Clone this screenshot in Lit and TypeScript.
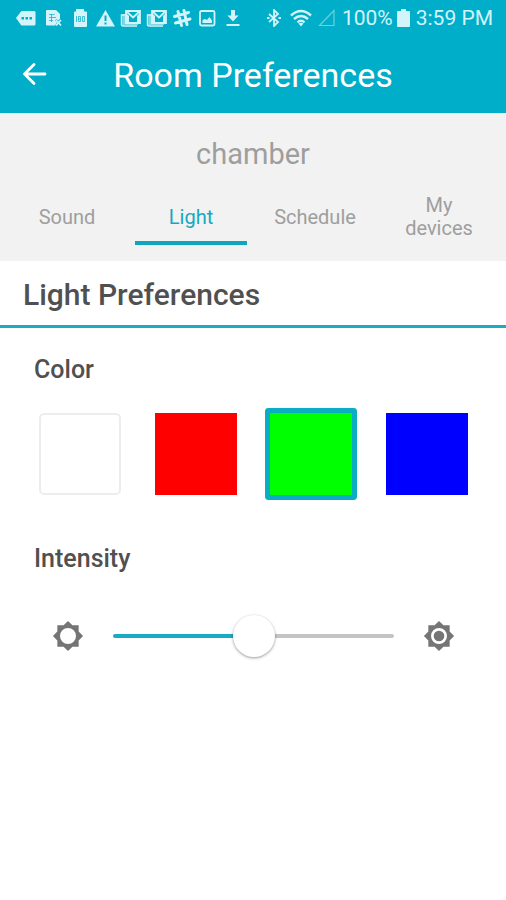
import { LitElement, html, css, svg } from "lit";
import { customElement, state } from "lit/decorators.js";

const notices = [
  svg`<path fill="currentColor" d="M0 10 5 3.500Q5.500 3 6.500 3H18Q19.500 3 19.500 4.500V16Q19.500 17.500 18 17.500H6.500Q5.500 17.500 5 17Z"/><path fill="#00aec9" d="M5.500 9h2.500v2.500H5.500zM9.500 9h2.500v2.500H9.500zM13.500 9h2.500v2.500h-2.500z"/>`,
  svg`<path fill="currentColor" d="M5 2h9l4 4v5l-2 1.500-1.500-1.500-1.500 1.500 2 2-2 3H5q-1 0-1-1V3q0-1 1-1z"/><path fill="none" stroke="#00aec9" stroke-width=".7" d="M7 6.500h5.500M7 9.500h7M7 12.500h4M9.500 6v8"/><path fill="none" stroke="currentColor" stroke-width="1.800" d="m14 12 5 5.500m0-5.500-5 5.500"/>`,
  svg`<path fill="currentColor" d="M8 1h8v2.500h2q1 0 1 1V18q0 1-1 1H7q-1 0-1-1V4.500q0-1 1-1h1z"/><path fill="none" stroke="#00aec9" stroke-width=".7" d="M8.500 8v6M10.500 8.500h2v5h-2zM10.500 11h2M14.500 8.500h2v5h-2z"/>`,
  svg`<path fill="currentColor" d="M11.500 2 21 18.500H2z"/><path fill="#00aec9" d="M10.500 7.500h2v5.500h-2zM10.500 14.500h2v2h-2z"/>`,
  svg`<path fill="none" stroke="currentColor" stroke-width="1.500" d="M5 7H1.500v9.500q0 1.500 2 1.500H17"/><path fill="currentColor" d="M2.500 6H6v9h12v2H2.500z" opacity=".6"/><path fill="none" stroke="currentColor" stroke-width="1.800" d="M6 3h14v12H6zM6 3l7 6.500L20 3"/><path fill="currentColor" d="M6 5 9 8v7H6zM20 5l-3 3v7h3z"/>`,
  svg`<path fill="none" stroke="currentColor" stroke-width="1.500" d="M5 7H1.500v9.500q0 1.500 2 1.500H17"/><path fill="currentColor" d="M2.500 6H6v9h12v2H2.500z" opacity=".6"/><path fill="none" stroke="currentColor" stroke-width="1.800" d="M6 3h14v12H6zM6 3l7 6.500L20 3"/><path fill="currentColor" d="M6 5 9 8v7H6zM20 5l-3 3v7h3z"/>`,
  svg`<path fill="none" stroke="currentColor" stroke-width="3" stroke-linecap="round" d="m6 3.500 3.500 14M12 2.500l3 14M2.500 8.500l14-4M3.500 15l14.500-4"/>`,
  svg`<rect x="2" y="3" width="14.500" height="14.500" rx="1.500" fill="none" stroke="currentColor" stroke-width="1.800"/><path fill="currentColor" d="M4.500 15v-3l2.500-1 2 1 2.500-3L14 12.500V15z"/>`,
  svg`<path fill="currentColor" d="M7 2h4v5.500h3.500L9 13.500 3.500 7.500H7zM2.500 16h13v2h-13z"/>`,
];

const tabs = ["Sound", "Light", "Schedule", "My devices"];
const colors = ["white", "red", "green", "blue"];

const SUN =
  "M20 15.310 23.310 12 20 8.690V4h-4.690L12 .690 8.690 4H4v4.690L.690 12 4 15.310V20h4.690L12 23.310 15.310 20H20zM12 18a6 6 0 1 1 0-12 6 6 0 0 1 0 12z";

@customElement("app-root")
export class AppRoot extends LitElement {
  @state() private tab = "Light";
  @state() private color = "green";
  @state() private intensity = 50;

  static styles = css`
    :host {
      display: block;
      min-height: 100vh;
      background: #fff;
      color: #505050;
      font-family: Roboto, "Liberation Sans", sans-serif;
    }
    * { box-sizing: border-box; }
    h1, h2, h3, p { margin: 0; }
    svg { display: block; flex: none; }
    .top { background: #00aec9; color: #fff; }
    .status {
      display: flex;
      align-items: center;
      justify-content: space-between;
      height: 36px;
      padding: 0 13px 0 16px;
      color: #d3f4fa;
      font-size: 21px;
      line-height: 26px;
    }
    .notices { display: flex; gap: 6px; }
    .system { display: flex; align-items: center; }
    .wifi { margin: 0 6px 0 9px; }
    .signal { margin-right: 7px; }
    .battery { margin: 0 6px 0 4px; }
    .bar {
      display: grid;
      grid-template-columns: 70px 1fr 70px;
      align-items: center;
      height: 77px;
    }
    .back {
      display: flex;
      align-items: center;
      width: 70px;
      height: 56px;
      padding: 0 0 0 22px;
      border: 0;
      background: none;
      color: #fff;
    }
    .title { font-size: 34px; font-weight: 400; line-height: 42px; text-align: center; }
    .room { background: #f2f2f2; padding: 20px 5px 16px; }
    .name { color: #9e9e9e; font-size: 29px; line-height: 42px; font-weight: 400; text-align: center; }
    .tabs { display: grid; grid-template-columns: repeat(4, 1fr); margin-top: 18px; }
    .tab {
      height: 52px;
      margin: 0 6px;
      padding: 0 10px;
      border: 0;
      border-bottom: 4px solid transparent;
      background: none;
      color: #9e9e9e;
      font: 400 20px/23px Roboto, "Liberation Sans", sans-serif;
    }
    .tab[aria-selected="true"] { color: #12a9c3; border-color: #0fa5bd; }
    .heading {
      padding: 15px 23px 11px;
      border-bottom: 3px solid #1cacc2;
      font-size: 30px;
      line-height: 38px;
      font-weight: 500;
    }
    .label { padding: 0 34px; font-size: 25px; font-weight: 500; line-height: 30px; }
    .color-group { padding-top: 27px; }
    .swatches { display: flex; justify-content: space-between; padding: 28px 38px 0 39px; }
    .swatch {
      appearance: none;
      width: 82px;
      height: 82px;
      margin: 0;
    }
    .white { background: #fff; border: 2px solid #ededed; border-radius: 5px; }
    .red { background: #f00; }
    .green { background: #0f0; }
    .blue { background: #00f; }
    .swatch:checked { box-shadow: 0 0 0 5px #0badc4; border-radius: 1px; }
    .intensity-group { padding-top: 49px; }
    .slider-row { display: flex; align-items: center; gap: 29px; padding: 40px 51px 0 52px; color: #757575; }
    .slider {
      appearance: none;
      flex: 1;
      min-width: 0;
      height: 44px;
      margin: 0;
      background: none;
    }
    .slider::-webkit-slider-runnable-track {
      height: 4px;
      border-radius: 2px;
      background: linear-gradient(to right, #1aabc4 var(--level), #c4c4c4 var(--level));
    }
    .slider::-webkit-slider-thumb {
      appearance: none;
      width: 42px;
      height: 42px;
      margin-top: -19px;
      border-radius: 50%;
      background: #fff;
      box-shadow: 0 1px 3px rgba(0, 0, 0, 0.4);
    }
  `;

  render() {
    return html`
      <header class="top">
        <div class="status">
          <div class="notices">
            ${notices.map((n) => html`<svg width="20" height="20" viewBox="0 0 20 20" overflow="visible" aria-hidden="true">${n}</svg>`)}
          </div>
          <div class="system">
            <svg width="14" height="18" viewBox="0 0 14 18" aria-hidden="true">
              <path d="m2 5 9 8-4 4V1l4 4-9 8" fill="none" stroke="currentColor" stroke-width="1.800" />
              <path d="M0 9h2.500M11.500 9H14" stroke="currentColor" stroke-width="2" />
            </svg>
            <svg class="wifi" width="22" height="18" viewBox="0 0 22 18" aria-hidden="true">
              <g fill="none" stroke="currentColor" stroke-width="2.400">
                <path d="M1 6.500q10-9 20 0M4 10q7-6 14 0M7.500 13.300q3.500-3 7 0" />
              </g>
              <path fill="currentColor" d="m8.500 14.500 2.500 3 2.500-3q-2.500-1.500-5 0z" />
            </svg>
            <svg class="signal" width="17" height="18" viewBox="0 0 17 18" aria-hidden="true">
              <path d="M16 1.500V16.500H1.500z" fill="none" stroke="#65d2e0" stroke-width="1.200" />
            </svg>
            <span>100%</span>
            <svg class="battery" width="13" height="18" viewBox="0 0 13 18" aria-hidden="true">
              <path fill="currentColor" d="M4 0h5v2h3q1 0 1 1v14q0 1-1 1H1q-1 0-1-1V3q0-1 1-1h3z" />
            </svg>
            <span>3:59 PM</span>
          </div>
        </div>
        <div class="bar">
          <button class="back" aria-label="Back">
            <svg width="25" height="26" viewBox="0 0 25 26" aria-hidden="true">
              <path d="M23 12H3M12 2.500 2.500 12l9.500 9.500" fill="none" stroke="currentColor" stroke-width="2.800" stroke-linecap="round" stroke-linejoin="round" />
            </svg>
          </button>
          <h1 class="title">Room Preferences</h1>
        </div>
      </header>
      <section class="room">
        <p class="name">chamber</p>
        <div class="tabs" role="tablist">
          ${tabs.map(
            (t) => html`<button class="tab" role="tab" aria-selected=${t === this.tab ? "true" : "false"} @click=${() => (this.tab = t)}>${t}</button>`
          )}
        </div>
      </section>
      <main>
        <h2 class="heading">Light Preferences</h2>
        <div class="color-group" role="radiogroup" aria-labelledby="color">
          <h3 class="label" id="color">Color</h3>
          <div class="swatches">
            ${colors.map(
              (c) => html`<input class="swatch ${c}" type="radio" name="color" aria-label=${c} .checked=${c === this.color} @change=${() => (this.color = c)} />`
            )}
          </div>
        </div>
        <div class="intensity-group">
          <h3 class="label"><label for="intensity">Intensity</label></h3>
          <div class="slider-row">
            <svg width="32" height="32" viewBox="0 0 24 24" aria-hidden="true"><path fill="currentColor" d=${SUN} /></svg>
            <input
              class="slider"
              id="intensity"
              type="range"
              min="0"
              max="100"
              style="--level: ${this.intensity}%"
              .value=${String(this.intensity)}
              @input=${(e: Event) => (this.intensity = Number((e.target as HTMLInputElement).value))}
            />
            <svg width="32" height="32" viewBox="0 0 24 24" aria-hidden="true">
              <path fill="currentColor" d=${SUN} /><circle cx="12" cy="12" r="4" fill="currentColor" />
            </svg>
          </div>
        </div>
      </main>
    `;
  }
}
